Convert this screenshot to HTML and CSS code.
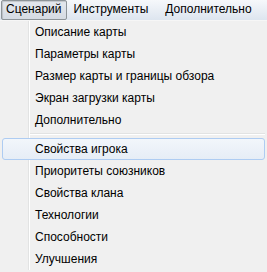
FILE: index.html
```html
<!DOCTYPE html>
<html lang="ru">
<head>
    <meta charset="UTF-8">
    <title>Сценарий</title>
    <link rel="stylesheet" href="styles.css">
</head>
<body>
    <div class="menubar">
        <span class="top-item pressed">Сценарий</span>
        <span class="top-item">Инструменты</span>
        <span class="top-item">Дополнительно</span>
    </div>

    <div class="dropdown">
        <div class="item">Описание карты</div>
        <div class="item">Параметры карты</div>
        <div class="item">Размер карты и границы обзора</div>
        <div class="item">Экран загрузки карты</div>
        <div class="item">Дополнительно</div>
        <div class="separator"></div>
        <div class="item active">Свойства игрока</div>
        <div class="item">Приоритеты союзников</div>
        <div class="item">Свойства клана</div>
        <div class="item">Технологии</div>
        <div class="item">Способности</div>
        <div class="item">Улучшения</div>
    </div>
</body>
</html>
```

FILE: styles.css
```css
body {
    margin: 0;
    font-family: 'Liberation Sans', Arial, sans-serif;
    font-size: 12px;
    color: #000;
    background: #f0f0f0;
    overflow: hidden;
}

.menubar {
    display: flex;
    height: 20px;
    align-items: center;
    background: linear-gradient(#f6f8fb, #dde5ef);
    border-bottom: 1px solid #f6f6f6;
    padding-left: 1px;
    white-space: nowrap;
}

.top-item {
    height: 18px;
    line-height: 17px;
    padding: 0 10px 0 5px;
    border: 1px solid transparent;
}

.pressed {
    padding: 0 5px 0 4px;
    border-color: #8d9499;
    border-radius: 2px;
    background: linear-gradient(#e4e8ee, #d5dbe3);
    box-shadow: inset 1px 1px 1px rgba(0,0,0,0.15);
}

.dropdown {
    position: relative;
    padding: 0 2px;
    background: #f0f0f0;
}

.dropdown::before {
    content: '';
    position: absolute;
    left: 28px;
    top: 0;
    bottom: 0;
    width: 1px;
    background: #e2e3e3;
    border-right: 1px solid #ffffff;
}

.item {
    position: relative;
    height: 22px;
    line-height: 22px;
    padding-left: 32px;
    border: 1px solid transparent;
    border-width: 0 1px;
}

.item.active {
    height: 20px;
    line-height: 20px;
    border: 1px solid #aeccf2;
    border-radius: 3px;
    background: linear-gradient(#f2f6fb, #e6edf6);
}

.separator {
    position: relative;
    margin-left: 28px;
    height: 1px;
    margin-top: 2px;
    margin-bottom: 3px;
    background: #e2e3e3;
    border-bottom: 1px solid #ffffff;
}
```
